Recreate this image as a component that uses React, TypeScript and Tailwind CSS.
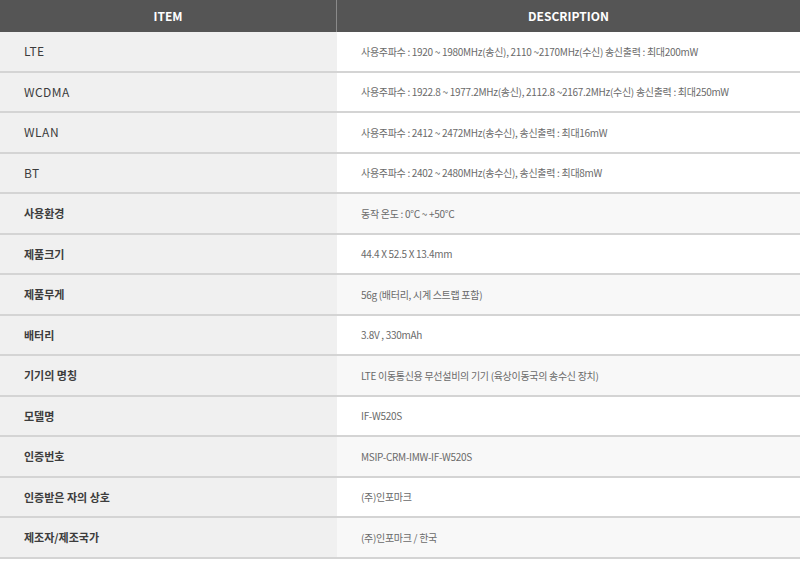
import React from "react";

type Spec = { item: string; desc: string; bold?: boolean };

const specs: Spec[] = [
  { item: "LTE", desc: "사용주파수 : 1920 ~ 1980MHz(송신), 2110 ~2170MHz(수신) 송신출력 : 최대200mW" },
  { item: "WCDMA", desc: "사용주파수 : 1922.8 ~ 1977.2MHz(송신), 2112.8 ~2167.2MHz(수신) 송신출력 : 최대250mW" },
  { item: "WLAN", desc: "사용주파수 : 2412 ~ 2472MHz(송수신),  송신출력 : 최대16mW" },
  { item: "BT", desc: "사용주파수 : 2402 ~ 2480MHz(송수신),  송신출력 : 최대8mW" },
  { item: "사용환경", desc: "동작 온도 : 0℃ ~ +50℃", bold: true },
  { item: "제품크기", desc: "44.4 X 52.5 X 13.4mm", bold: true },
  { item: "제품무게", desc: "56g (배터리, 시계 스트랩 포함)", bold: true },
  { item: "배터리", desc: "3.8V , 330mAh", bold: true },
  { item: "기기의 명칭", desc: "LTE 이동통신용 무선설비의 기기 (육상이동국의 송수신 장치)", bold: true },
  { item: "모델명", desc: "IF-W520S", bold: true },
  { item: "인증번호", desc: "MSIP-CRM-IMW-IF-W520S", bold: true },
  { item: "인증받은 자의 상호", desc: "(주)인포마크", bold: true },
  { item: "제조자/제조국가", desc: "(주)인포마크 / 한국", bold: true },
];

const font = { fontFamily: '"Noto Sans CJK KR", "Noto Sans", sans-serif' };

export default function App() {
  return (
    <div className="w-[800px] h-[561px] bg-white" style={font}>
      {/* 헤더 */}
      <div className="flex h-[32px] bg-[#555555] text-white text-[12px] font-bold">
        <div className="w-[337px] flex items-center justify-center border-r border-[#8a8a8a]">ITEM</div>
        <div className="flex-1 flex items-center justify-center">DESCRIPTION</div>
      </div>
      <div className="flex flex-col">
        {specs.map((s, i) => {
          const gray = i >= 4 && i % 2 === 0;
          return (
            <div key={s.item} className="flex h-[40.5px] border-b-2 border-[#d4d4d4]">
              <div
                className={
                  "w-[337px] bg-[#f0f0f0] flex items-center pl-[24px] text-[#3c3c3c] " +
                  (s.bold ? "text-[11px] font-bold" : "text-[12px] font-normal tracking-[0.5px]")
                }
              >
                {s.item}
              </div>
              <div
                className={
                  "flex-1 flex items-center pl-[24px] text-[10px] text-[#6a6a6a] tracking-[-0.3px] " +
                  (gray ? "bg-[#f8f8f8]" : "bg-white")
                }
              >
                {s.desc}
              </div>
            </div>
          );
        })}
      </div>
    </div>
  );
}
